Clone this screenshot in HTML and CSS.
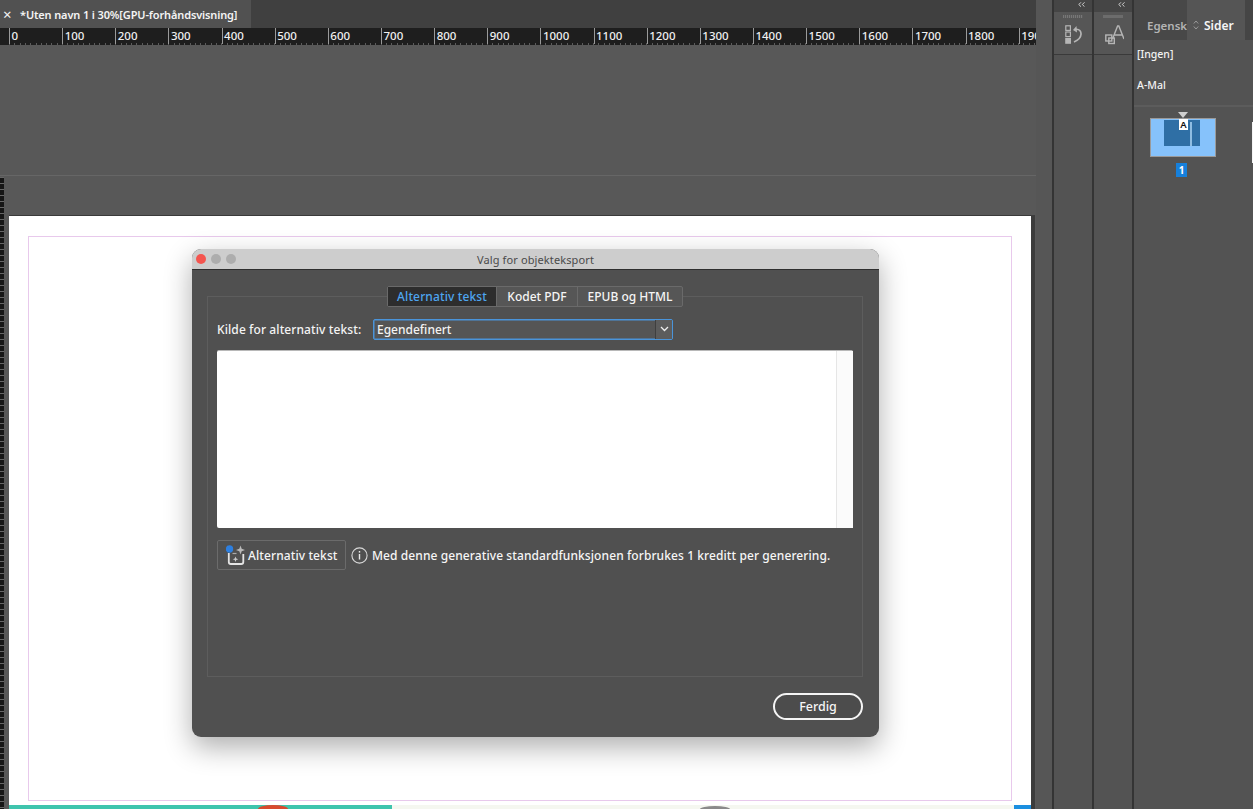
FILE: index.html
```html
<!DOCTYPE html>
<html lang="no">
<head>
<meta charset="utf-8">
<title>Valg for objekteksport</title>
<link rel="stylesheet" href="styles.css">
</head>
<body>
<div class="app">
  <main class="doc">
    <div class="tabbar">
      <div class="doctab"><span class="close">×</span><span class="doctitle">*Uten navn 1 i 30%[GPU-forhåndsvisning]</span></div>
    </div>
    <div class="ruler">
      <span class="grip"></span>
      <span class="rc">0</span><span class="rc">100</span><span class="rc">200</span><span class="rc">300</span><span class="rc">400</span><span class="rc">500</span><span class="rc">600</span><span class="rc">700</span><span class="rc">800</span><span class="rc">900</span><span class="rc">1000</span><span class="rc">1100</span><span class="rc">1200</span><span class="rc">1300</span><span class="rc">1400</span><span class="rc">1500</span><span class="rc">1600</span><span class="rc">1700</span><span class="rc">1800</span><span class="rc">1900</span>
    </div>
    <div class="pasteboard"></div>
    <div class="spread">
      <div class="vruler"></div>
      <div class="pagecol">
        <div class="gap"></div>
        <div class="page">
          <div class="margins"></div>
          <div class="strip">
            <span class="teal"><i class="red"></i></span><span class="pale"><i class="grey"></i></span><span class="blue"></span>
          </div>
        </div>
      </div>
    </div>
  </main>

  <aside class="side">
    <div class="gutter"></div>
    <div class="dock">
      <div class="dockhead"><svg width="7" height="5" viewBox="0 0 7 5"><path d="M3 .3.8 2.500 3 4.700M6.500.3 4.300 2.500 6.500 4.700" fill="none" stroke="#d0d0d0" stroke-width="1"/></svg></div>
      <div class="dockicon">
        <span class="handle dotted"></span>
        <svg class="ico1" width="17" height="19" viewBox="0 0 17 19"><g fill="none" stroke="#b5b5b5" stroke-width="1.200"><rect x=".8" y=".8" width="4.600" height="4.600"/><rect x=".8" y="7" width="4.600" height="4.600"/></g><rect x=".2" y="13" width="5.800" height="5.800" fill="#b5b5b5"/><path d="M11.500 1 8 5l4 2.500z" fill="#b5b5b5"/><path d="M10.500 4.300c4-.5 5.700 2 5.500 5-.2 3.500-3 6-7 7.700" fill="none" stroke="#b5b5b5" stroke-width="1.700"/></svg>
      </div>
    </div>
    <div class="dock">
      <div class="dockhead"><svg width="7" height="5" viewBox="0 0 7 5"><path d="M3 .3.8 2.500 3 4.700M6.500.3 4.300 2.500 6.500 4.700" fill="none" stroke="#d0d0d0" stroke-width="1"/></svg></div>
      <div class="dockicon">
        <span class="handle"></span>
        <svg class="ico2" width="19" height="20" viewBox="0 0 19 20"><g fill="none" stroke="#b5b5b5" stroke-width="1.400"><rect x=".8" y="10" width="6" height="6"/><rect x="3.800" y="13" width="5.500" height="5.500"/></g><path d="M7.500 14 12.600 1h1.200L19 14M9 10h9" fill="none" stroke="#b5b5b5" stroke-width="1.400"/></svg>
      </div>
    </div>
    <div class="pages">
      <div class="ptabs">
        <span class="ptab">Egensk</span>
        <span class="ptab on"><svg class="updown" width="6" height="10" viewBox="0 0 6 10"><path d="M.8 3.500 3 1l2.200 2.500M.8 6.500 3 9l2.200-2.500" fill="none" stroke="#999" stroke-width="1"/></svg>Sider</span>
      </div>
      <div class="masters">
        <div class="master">[Ingen]</div>
        <div class="master">A-Mal</div>
      </div>
      <div class="thumbs">
        <div class="thumbwrap">
          <span class="tri"></span>
          <div class="thumb"><div class="thumbin"><span class="abadge">A</span><span class="bar"></span></div></div>
          <span class="pnum">1</span>
        </div>
        <div class="nextthumb"></div>
      </div>
    </div>
  </aside>

  <section class="dialog">
    <header class="titlebar">
      <span class="lights"><i class="l r"></i><i class="l"></i><i class="l"></i></span>
      <span class="wintitle">Valg for objekteksport</span>
    </header>
    <div class="dbody">
      <div class="group">
        <div class="seg">
          <span class="segitem active">Alternativ tekst</span><span class="segitem">Kodet PDF</span><span class="segitem">EPUB og HTML</span>
        </div>
        <div class="row">
          <label class="lbl">Kilde for alternativ tekst:</label>
          <div class="select"><span class="val">Egendefinert</span><span class="caret"><svg width="9" height="6" viewBox="0 0 9 6"><path d="M1 1l3.500 3.500L8 1" fill="none" stroke="#eee" stroke-width="1.300"/></svg></span></div>
        </div>
        <div class="textbox"><div class="textarea"></div><div class="scroll"></div></div>
        <div class="genrow">
          <button class="genbtn">
            <svg width="20" height="22" viewBox="0 0 20 22"><path d="M2.800 9v9a2 2 0 0 0 2 2h10.500a2 2 0 0 0 2-2V10" fill="none" stroke="#e4e4e4" stroke-width="1.800"/><path d="M6.500 9.500h4" stroke="#aaa" stroke-width="1.200"/><circle cx="3.500" cy="5" r="3.700" fill="#2d7fe0"/><path d="M14.500 1.500l1.200 3.300 3.300 1.200-3.300 1.200-1.200 3.300-1.200-3.300-3.300-1.200 3.300-1.200z" fill="#b9b9b9"/><path d="M9.500 12.500l.8 2 2 .8-2 .8-.8 2-.8-2-2-.8 2-.8z" fill="#c9c9c9"/></svg>
            <span>Alternativ tekst</span>
          </button>
          <svg class="info" width="17" height="17" viewBox="0 0 17 17"><circle cx="8.500" cy="8.500" r="7.600" fill="none" stroke="#d8d8d8" stroke-width="1.100"/><rect x="7.800" y="7" width="1.400" height="5.500" fill="#e8e8e8"/><rect x="7.800" y="4" width="1.400" height="1.600" fill="#e8e8e8"/></svg>
          <span class="note">Med denne generative standardfunksjonen forbrukes 1 kreditt per generering.</span>
        </div>
      </div>
      <div class="actions"><button class="done">Ferdig</button></div>
    </div>
  </section>
</div>
</body>
</html>
```

FILE: styles.css
```css
* { box-sizing: border-box; }
html, body { margin: 0; padding: 0; height: 100%; overflow: hidden; }
body { font-family: "Noto Sans", "Liberation Sans", sans-serif; background: #535353; color: #f2f2f2; }

.app { position: relative; display: flex; width: 1253px; height: 809px; overflow: hidden; }

.doc { width: 1036px; flex: none; display: flex; flex-direction: column; background: #585858; }

.tabbar { height: 28px; background: #404040; flex: none; }
.doctab { width: 251px; height: 28px; background: #515151; display: flex; align-items: center; padding-left: 3px; font-size: 11px; font-weight: 600; color: #f4f4f4; white-space: nowrap; }
.close { font-size: 15px; font-weight: 400; width: 17px; line-height: 1; flex: none; }
.doctitle { letter-spacing: -.13px; }

.ruler { height: 17px; flex: none; background: #1e1e1e; display: flex; overflow: hidden; font-size: 11.500px; font-weight: 500; line-height: 15px; color: #f0f0f0;
  background-image: repeating-linear-gradient(90deg, #5c5c5c 0 1px, transparent 1px 5.310px);
  background-size: 100% 2px; background-repeat: no-repeat; background-position: 9px 15px; }
.grip { width: 9px; flex: none; }
.rc { width: 53.150px; flex: none; padding-left: 1.500px; border-left: 1px solid #9a9a9a; height: 16px; }

.pasteboard { height: 131px; flex: none; background: #585858; border-bottom: 1px solid #666; }

.spread { flex: 1; display: flex; min-height: 0; }
.vruler { width: 4px; flex: none; margin-top: 1px; background: #161616;
  background-image: repeating-linear-gradient(180deg, #666 0 1px, transparent 1px 6px); }
.pagecol { flex: 1; display: flex; flex-direction: column; min-width: 0; }
.gap { height: 39px; flex: none; }

.page { flex: 1; margin: 0 5px 0 5px; background: #fff; border-top: 1px solid #3a3a3a; display: flex; flex-direction: column; box-shadow: 4px 0 0 #3c3c3c; }
.margins { flex: 1; margin: 20px 19px 0 19px; border: 1px solid #e8c9ec; }
.strip { height: 4px; margin-top: 4px; flex: none; display: flex; }
.teal { width: 383px; flex: none; background: #3fc4ad; position: relative; }
.red { position: absolute; left: 249px; top: 0; width: 30px; height: 4px; background: #d9492f; border-radius: 15px 15px 0 0 / 4px 4px 0 0; }
.pale { flex: 1; background: #f5f7f0; position: relative; }
.grey { position: absolute; left: 308px; top: 1px; width: 30px; height: 3px; background: #8a8a8a; border-radius: 15px 15px 0 0 / 3px 3px 0 0; }
.blue { width: 17px; flex: none; background: #1b8fe0; }

.side { flex: 1; display: flex; background: #535353; min-width: 0; }
.gutter { width: 18px; flex: none; background: #565656; border-right: 2px solid #343434; }
.dock { width: 40px; flex: none; border-right: 2px solid #343434; background: #535353; }
.dockhead { height: 12px; background: #454545; display: flex; justify-content: flex-end; padding: 2px 7px 0 0; }
.dockicon { height: 43px; background: #565656; border-bottom: 1px solid #3a3a3a; display: flex; flex-direction: column; align-items: center; gap: 0; padding-top: 3px; }
.handle { width: 20px; height: 3px; background: #6c6c6c; flex: none; }
.handle.dotted { background-image: repeating-linear-gradient(90deg, #777 0 1px, #5c5c5c 1px 2px); }
.ico1 { margin-top: 7px; margin-left: 1px; }
.ico2 { margin-top: 7px; margin-left: 2px; }

.pages { flex: 1; min-width: 0; overflow: hidden; }
.ptabs { height: 40px; display: flex; background: #454545; }
.ptab { width: 53px; padding-top: 17px; padding-left: 13px; height: 40px; font-size: 11.500px; font-weight: 600; color: #b4b4b4; background: #484848; white-space: nowrap; overflow: hidden; line-height: 17px; }
.ptab.on { width: 58px; padding-left: 6px; font-size: 12px; color: #f6f6f6; background: #555; }
.updown { margin-right: 5px; }
.masters { height: 67px; background: #535353; border-bottom: 2px solid #5c5c5c; padding: 6px 0 0 3px; font-size: 10.500px; font-weight: 500; color: #f2f2f2; }
.master { height: 31px; line-height: 16px; }
.thumbs { display: flex; padding-left: 16px; padding-top: 5px; }
.thumbwrap { width: 66px; flex: none; display: flex; flex-direction: column; align-items: center; }
.tri { width: 0; height: 0; border-left: 5px solid transparent; border-right: 5px solid transparent; border-top: 6px solid #cfcfcf; }
.thumb { width: 66px; height: 39px; background: #86c2fb; border: 1px solid #9a9a9a; padding: 1px 15px 10px 13px; }
.thumbin { height: 26px; background: #2f6fa5; position: relative; }
.abadge { position: absolute; left: 15px; top: -1px; width: 9px; height: 11px; background: #fff; color: #111; font-size: 9.500px; font-weight: 600; line-height: 11px; text-align: center; }
.bar { position: absolute; right: 8px; top: 2px; width: 2px; height: 24px; background: #8fbde2; }
.pnum { margin: 6px 3px 0 0; width: 11px; height: 14px; background: #1680dc; color: #fff; font-size: 10px; font-weight: 700; line-height: 14px; text-align: center; }
.nextthumb { width: 12px; height: 41px; flex: none; margin: 10px 0 0 36px; background: #f4f4f4; }

.dialog { position: absolute; left: 192px; top: 249px; width: 687px; height: 488px; border-radius: 9px; overflow: visible; background: #505050; box-shadow: 0 10px 28px rgba(0,0,0,.32); display: flex; flex-direction: column; }
.titlebar { height: 21px; flex: none; background: #cdcdcd; border-bottom: 1px solid #2e2e2e; border-radius: 9px 9px 0 0; position: relative; display: flex; align-items: center; justify-content: center; padding-left: 0; }
.lights { position: absolute; left: 4px; top: 5px; display: flex; gap: 5px; }
.l { width: 10px; height: 10px; border-radius: 50%; background: #adadad; display: block; }
.l.r { background: #f4554f; }
.wintitle { font-size: 11px; color: #4a4a4a; letter-spacing: .12px; }

.dbody { flex: 1; display: flex; flex-direction: column; padding: 26px 16px 16px 15px; }
.group { height: 381px; flex: none; border: 1px solid #5d5d5d; padding: 0 9px; display: flex; flex-direction: column; }
.seg { align-self: flex-start; margin: -11px 0 0 170px; height: 21px; display: flex; background: #565656; border: 1px solid #6a6a6a; border-radius: 2px; font-size: 12px; font-weight: 500; color: #f5f5f5; }
.segitem { display: flex; align-items: center; justify-content: center; width: 81px; border-left: 1px solid #6a6a6a; white-space: nowrap; }
.segitem:first-child { width: 108px; border-left: 0; letter-spacing: .12px; }
.segitem:last-child { width: 105px; }
.segitem.active { background: #2d2d2d; color: #4ea6f0; }

.row { display: flex; align-items: center; margin-top: 11px; height: 22px; flex: none; }
.lbl { width: 156px; flex: none; font-size: 12px; font-weight: 500; color: #f4f4f4; letter-spacing: .1px; white-space: nowrap; }
.select { width: 300px; height: 21px; border: 1px solid #4a94da; border-radius: 2px; background: #555; display: flex; align-items: stretch; font-size: 12px; font-weight: 500; box-shadow: inset 0 0 0 .5px #4a94da; }
.val { flex: 1; padding-left: 3px; line-height: 19px; }
.caret { width: 17px; background: #5c5c5c; border-left: 1px solid #3f3f3f; display: flex; align-items: center; justify-content: center; }

.textbox { margin-top: 10px; height: 178px; flex: none; width: 636px; background: #fff; display: flex; border-radius: 2px; border-top: 1px solid #b8b8b8; }
.textarea { flex: 1; }
.scroll { width: 17px; background: #fbfbfb; border-left: 1px solid #e6e6e6; }

.genrow { display: flex; align-items: center; margin-top: 12px; height: 30px; flex: none; }
.genbtn { width: 129px; height: 30px; flex: none; border: 1px solid #6b6b6b; border-radius: 2px; background: transparent; color: #f4f4f4; font: 500 12px "Noto Sans", "Liberation Sans", sans-serif; display: flex; align-items: center; gap: 2px; padding: 0 0 0 8px; letter-spacing: .1px; white-space: nowrap; }
.info { margin-left: 5px; flex: none; }
.note { margin-left: 4px; font-size: 12px; font-weight: 500; color: #f6f6f6; white-space: nowrap; letter-spacing: .09px; }

.actions { display: flex; justify-content: flex-end; margin-top: 16px; }
.done { width: 90px; height: 27px; border: 2px solid #f4f4f4; border-radius: 14px; background: #4c4c4c; color: #f6f6f6; font: 500 12.500px "Noto Sans", "Liberation Sans", sans-serif; padding: 0; }
```
